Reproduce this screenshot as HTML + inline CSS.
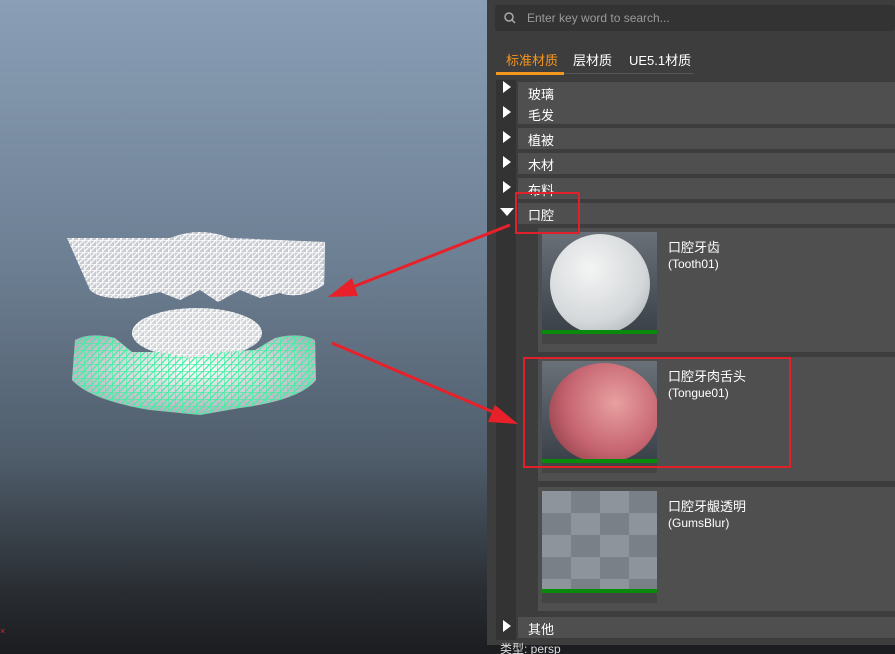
<!DOCTYPE html>
<html><head><meta charset="utf-8"><style>
*{margin:0;padding:0;box-sizing:border-box}
html,body{width:895px;height:654px;overflow:hidden}
body{position:relative;background:#1c1d20;font-family:"Liberation Sans","Noto Sans CJK SC",sans-serif;color:#fff}
#vp{position:absolute;left:0;top:0;width:487px;height:654px;background:linear-gradient(#8a9fb6 0%,#6d7f93 40%,#4f5d6b 70%,#2a2e33 90%,#1b1c1f 100%)}
#panel{position:absolute;left:487px;top:0;width:408px;height:645px;background:#3d3d3d}
.abs{position:absolute}
.search{left:495px;top:5px;width:400px;height:26px;background:#333;border-radius:3px}
.search span{position:absolute;left:32px;top:6px;font-size:12px;color:#9a9a9a}
.tab{top:50px;font-size:13px}
.strip{left:496px;top:80px;width:20px;height:560px;background:#333}
.row{left:518px;width:377px;height:21px;background:#4f4f4f;font-size:13px;padding:2px 0 0 10px}
.tri{left:503px;width:0;height:0;border-top:6px solid transparent;border-bottom:6px solid transparent;border-left:8px solid #fff}
.card{left:538px;width:357px;height:124px;background:#4f4f4f}
.thumb{position:absolute;left:4px;top:4px;width:115px;height:102px;overflow:hidden;background:#5a6068}
.thumb .g{position:absolute;left:0;bottom:0;width:100%;height:4px;background:#0a8a0a}
.under{position:absolute;left:4px;top:106px;width:115px;height:10px;background:#444}
.name{position:absolute;left:130px;top:12px;font-size:13px;line-height:16px}
.sub{font-size:12px;color:#fff}
.redbox{border:2px solid #e0202a;position:absolute}
</style></head><body>
<div id="vp">
<svg width="487" height="654" style="position:absolute;left:0;top:0">
<defs>
<radialGradient id="wg" cx="0.5" cy="0.4" r="0.6"><stop offset="0" stop-color="#fff"/><stop offset="1" stop-color="#aab2ba"/></radialGradient>
<pattern id="mesh" width="6" height="6" patternUnits="userSpaceOnUse"><path d="M0 0H6M0 0V6M0 6L6 0" stroke="#fff" stroke-width="1.2"/></pattern>
<pattern id="gmesh" width="7" height="7" patternUnits="userSpaceOnUse"><path d="M0 0H7M0 0V7M0 7L7 0" stroke="#3ef0a0" stroke-width="1.2"/></pattern>
</defs>
<path d="M67 238 L170 238 Q200 226 230 238 L325 242 L324 285 Q300 300 280 293 L260 298 L240 290 L218 302 L200 290 L180 300 L160 292 L130 298 Q100 300 90 290 Z" fill="#c8ccd2"/>
<path d="M67 238 L170 238 Q200 226 230 238 L325 242 L324 285 Q300 300 280 293 L260 298 L240 290 L218 302 L200 290 L180 300 L160 292 L130 298 Q100 300 90 290 Z" fill="url(#mesh)"/>
<ellipse cx="197" cy="333" rx="65" ry="25" fill="#d0d4d8"/>
<ellipse cx="197" cy="333" rx="65" ry="25" fill="url(#mesh)"/>
<path d="M75 340 Q90 332 115 338 L132 352 L160 352 L190 358 L220 352 L255 350 L275 338 Q300 332 315 340 L316 380 Q300 400 240 408 L200 415 L150 410 Q90 400 72 380 Z" fill="url(#wg)"/>
<path d="M75 340 Q90 332 115 338 L132 352 L160 352 L190 358 L220 352 L255 350 L275 338 Q300 332 315 340 L316 380 Q300 400 240 408 L200 415 L150 410 Q90 400 72 380 Z" fill="url(#gmesh)"/>
<text x="0" y="634" fill="#e8202a" font-size="9">×</text>
</svg>
</div>
<div id="panel"></div>
<div class="abs search"><svg width="14" height="14" style="position:absolute;left:8px;top:6px"><circle cx="6" cy="6" r="4" stroke="#aaa" stroke-width="1.5" fill="none"/><line x1="9" y1="9" x2="12" y2="12" stroke="#aaa" stroke-width="1.5"/></svg><span>Enter key word to search...</span></div>
<div class="abs tab" style="left:506px;color:#f5961e">标准材质</div>
<div class="abs" style="left:496px;top:72px;width:68px;height:3px;background:#f5961e"></div>
<div class="abs" style="left:564px;top:73px;width:130px;height:1px;background:#555"></div>
<div class="abs tab" style="left:573px">层材质</div>
<div class="abs tab" style="left:629px">UE5.1材质</div>
<div class="abs strip"></div>
<div class="abs row" style="top:82px">玻璃</div><div class="abs tri" style="top:81px"></div>
<div class="abs row" style="top:103px">毛发</div><div class="abs tri" style="top:106px"></div>
<div class="abs row" style="top:128px">植被</div><div class="abs tri" style="top:131px"></div>
<div class="abs row" style="top:153px">木材</div><div class="abs tri" style="top:156px"></div>
<div class="abs row" style="top:178px">布料</div><div class="abs tri" style="top:181px"></div>
<div class="abs row" style="top:203px">口腔</div>
<div class="abs" style="left:500px;top:208px;width:0;height:0;border-left:7px solid transparent;border-right:7px solid transparent;border-top:8px solid #fff"></div>
<div class="abs card" style="top:228px"><div class="thumb" style="background:linear-gradient(#6a7078,#3a4048)"><div style="position:absolute;left:8px;top:2px;width:100px;height:100px;border-radius:50%;background:radial-gradient(circle at 40% 35%,#f4f4f4,#d4d8da 60%,#9ea4a8)"></div><div class="g"></div></div><div class="under"></div><div class="name">口腔牙齿<br><span class="sub">(Tooth01)</span></div></div>
<div class="abs card" style="top:357px"><div class="thumb" style="background:linear-gradient(#6a7078,#3a4048)"><div style="position:absolute;left:7px;top:2px;width:110px;height:100px;border-radius:50%;background:radial-gradient(circle at 60% 40%,#e8a0a0,#c56470 55%,#7a3038)"></div><div class="g"></div></div><div class="under"></div><div class="name">口腔牙肉舌头<br><span class="sub">(Tongue01)</span></div></div>
<div class="abs card" style="top:487px"><div class="thumb" style="background:repeating-conic-gradient(#7a8088 0 25%,#8e949c 0 50%) 0 0/58px 44px"><div class="g"></div></div><div class="under"></div><div class="name">口腔牙龈透明<br><span class="sub">(GumsBlur)</span></div></div>
<div class="abs row" style="top:617px">其他</div><div class="abs tri" style="top:620px"></div>
<div class="abs" style="left:500px;top:643px;font-size:12px;line-height:12px;color:#ddd">类型: persp</div>
<div class="redbox" style="left:515px;top:192px;width:65px;height:42px"></div>
<div class="redbox" style="left:523px;top:357px;width:268px;height:111px"></div>
<svg width="895" height="654" style="position:absolute;left:0;top:0">
<g fill="#e8202a" stroke="#e8202a">
<line x1="510" y1="225" x2="345" y2="290" stroke-width="3"/>
<polygon points="328,297 352,278 358,296" stroke="none"/>
<line x1="332" y1="343" x2="500" y2="415" stroke-width="3"/>
<polygon points="518,424 495,405 488,422" stroke="none"/>
</g>
</svg>
</body></html>
